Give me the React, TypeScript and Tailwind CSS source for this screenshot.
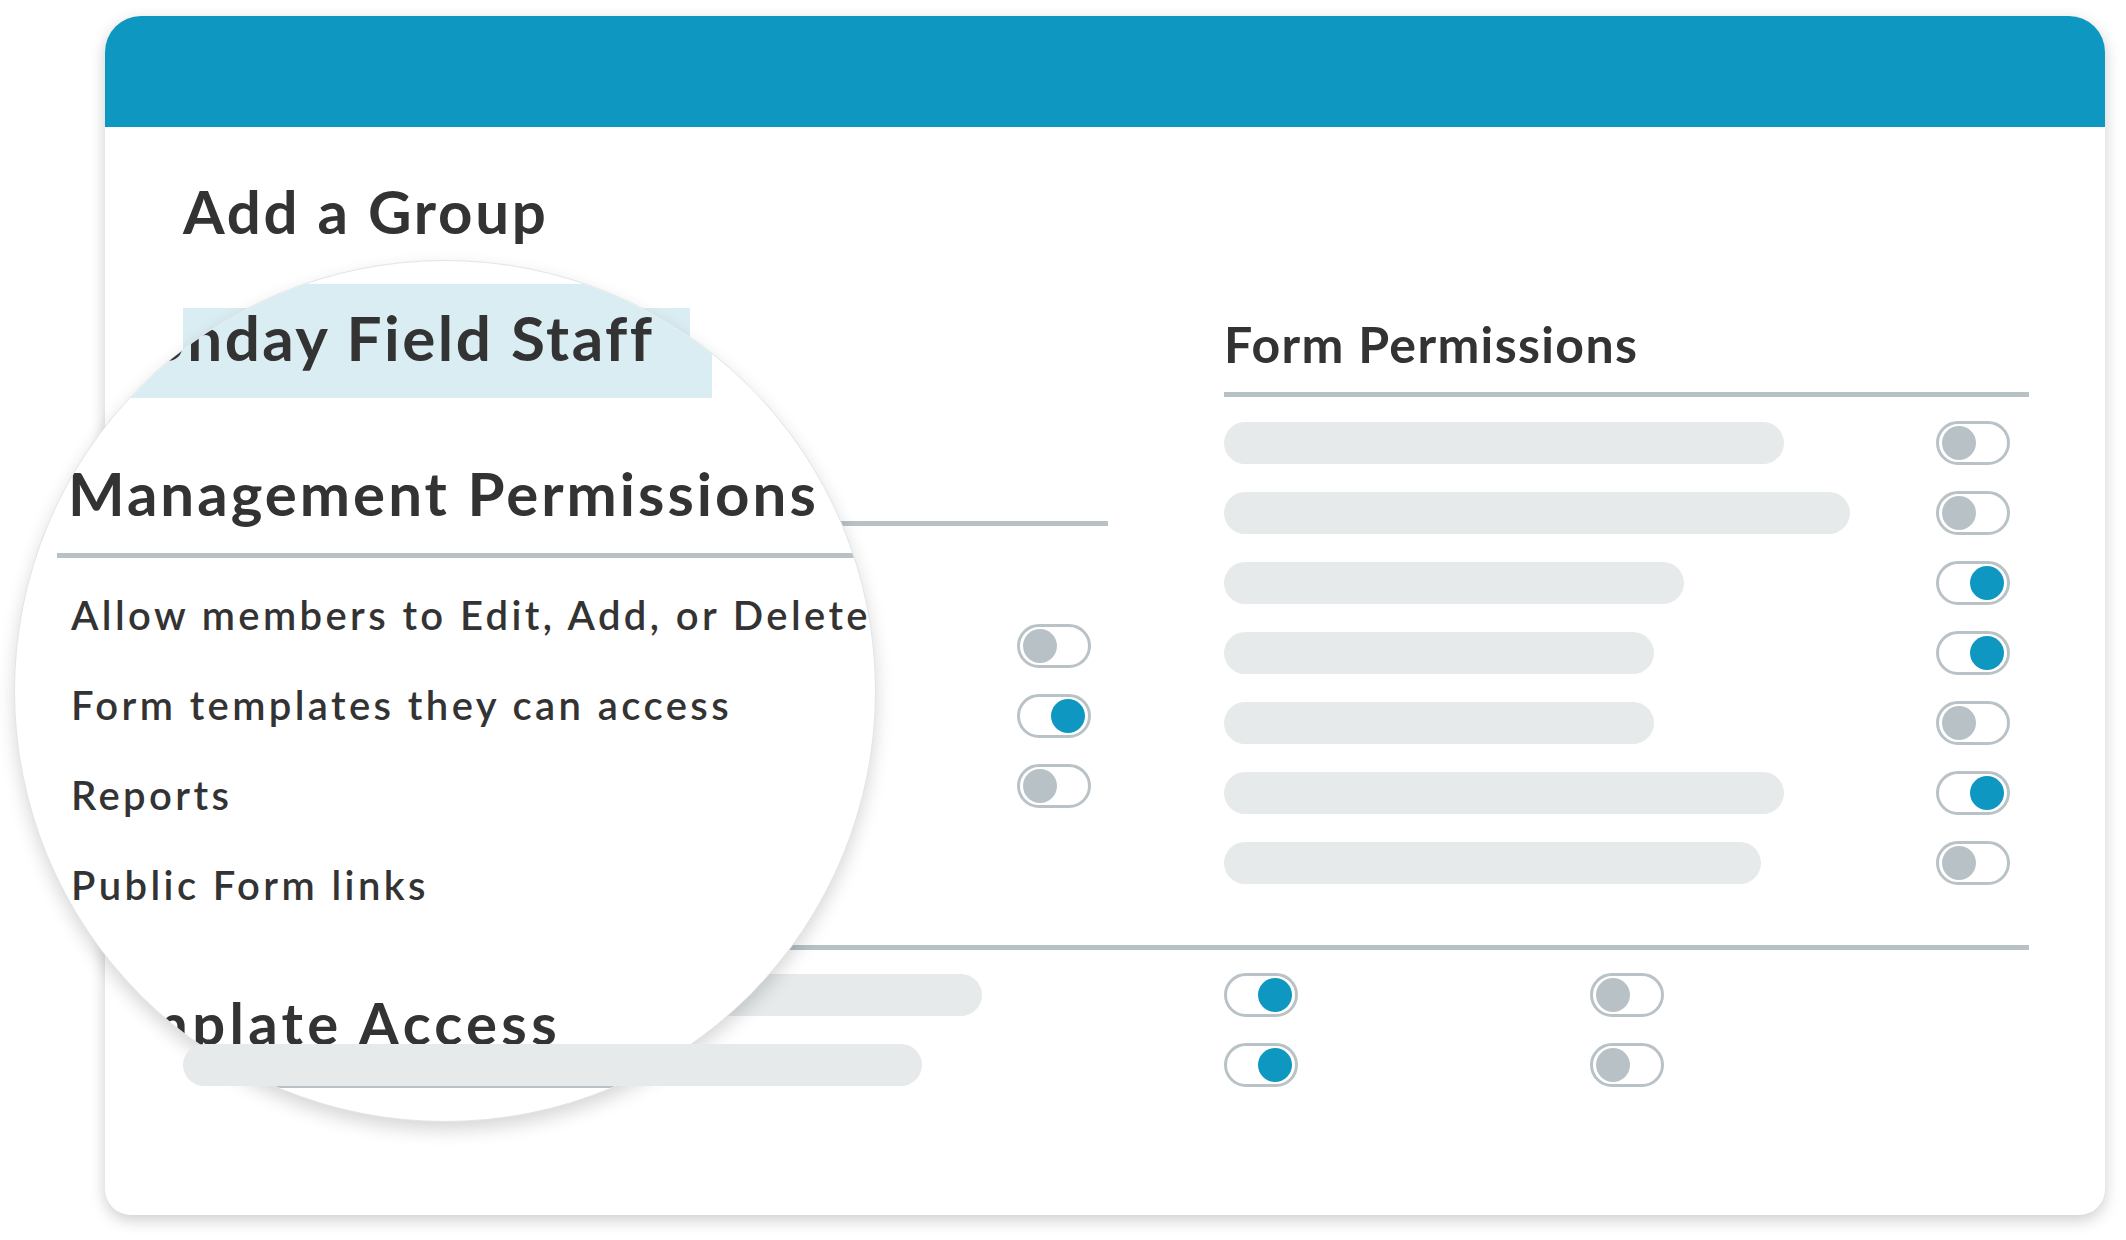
const FONT = "font-['Lato','Noto_Sans',sans-serif]"

function Toggle({ on }: { on: boolean }) {
  return (
    <div
      className={`flex h-[44px] w-[74px] shrink-0 items-center rounded-full border-[3px] border-[#b9c3c7] bg-white px-[3px] ${
        on ? 'justify-end' : 'justify-start'
      }`}
    >
      <div className={`h-[34px] w-[34px] rounded-full ${on ? 'bg-[#0e98c1]' : 'bg-[#b8c2c6]'}`} />
    </div>
  )
}

function Bar({ width }: { width: string }) {
  return <div className={`h-[42px] rounded-full bg-[#e6eaeb] ${width}`} />
}

const formRows = [
  { w: 'w-[560px]', on: false },
  { w: 'w-[626px]', on: false },
  { w: 'w-[460px]', on: true },
  { w: 'w-[430px]', on: true },
  { w: 'w-[430px]', on: false },
  { w: 'w-[560px]', on: true },
  { w: 'w-[537px]', on: false },
]

const magnifiedRows = [
  'Allow members to Edit, Add, or Delete Users',
  'Form templates they can access',
  'Reports',
  'Public Form links',
]

// the lens that blows up the left column
function Magnifier() {
  return (
    <div className="absolute left-[14px] top-[260px] z-10 h-[862px] w-[862px] overflow-hidden rounded-full border border-[#e2e5e6] bg-white shadow-[0_8px_18px_rgba(0,0,0,0.16)]">
      <div className="flex flex-col text-[#333333]">
        <div className="ml-[-20px] mt-[23px] h-[114px] w-[717px] bg-[#daedf3] pl-[94px] pt-[22px]">
          <div className="whitespace-nowrap text-[62px] font-bold leading-none tracking-[0.04em]">
            Monday Field Staff
          </div>
        </div>
        <h2 className="ml-[53px] mt-[65px] whitespace-nowrap text-[60px] font-bold leading-none tracking-[0.05em]">
          Management Permissions
        </h2>
        <div className="ml-[42px] mt-[30px] h-[5px] w-[900px] shrink-0 bg-[#b8c2c6]" />
        <div className="ml-[56px] mt-[37px] flex flex-col gap-[50px]">
          {magnifiedRows.map((label) => (
            <div key={label} className="whitespace-nowrap text-[40px] font-semibold leading-none tracking-[0.085em]">
              {label}
            </div>
          ))}
        </div>
        <h2 className="ml-[57px] mt-[89px] whitespace-nowrap text-[58px] font-bold leading-none tracking-[0.074em]">
          Template Access
        </h2>
        <div className="ml-[42px] mt-[31px] h-[5px] w-[900px] shrink-0 bg-[#b8c2c6]" />
      </div>
    </div>
  )
}

export default function App() {
  return (
    <div className={`relative min-h-screen bg-white pl-[105px] pt-[16px] ${FONT}`}>
      <div className="flex w-[2000px] flex-col rounded-b-[26px] rounded-t-[36px] bg-white pb-[128px] shadow-[0_5px_16px_rgba(0,0,0,0.2)]">
        {/* top bar */}
        <div className="h-[111px] rounded-t-[36px] bg-[#0e98c1]" />

        <div className="flex flex-col pl-[78px] pr-[76px] text-[#333333]">
          <h1 className="mt-[54px] text-[60px] font-bold leading-none tracking-[0.045em]">Add a Group</h1>

          <div className="mt-[67px] grid grid-cols-[925px_805px] gap-x-[116px]">
            {/* group name + management permissions */}
            <div className="flex flex-col">
              <div className="h-[95px] w-[507px] bg-[#daedf3]" />
              <div className="mt-[118px] h-[5px] bg-[#b8c2c6]" />
              <div className="mt-[98px] flex flex-col items-end gap-[26px] pr-[17px]">
                <Toggle on={false} />
                <Toggle on={true} />
                <Toggle on={false} />
              </div>
            </div>

            {/* form permissions */}
            <div className="flex flex-col">
              <h2 className="mt-[11px] text-[50px] font-bold leading-none tracking-[0.027em]">Form Permissions</h2>
              <div className="mt-[23px] h-[5px] bg-[#b8c2c6]" />
              <div className="mt-[24px] flex flex-col gap-[26px]">
                {formRows.map((row, i) => (
                  <div key={i} className="flex h-[44px] items-center justify-between pr-[19px]">
                    <Bar width={row.w} />
                    <Toggle on={row.on} />
                  </div>
                ))}
              </div>
            </div>
          </div>

          <div className="mt-[60px] h-[5px] bg-[#b8c2c6]" />

          {/* template access */}
          <div className="mt-[23px] flex flex-col gap-[26px]">
            <div className="grid grid-cols-[925px_805px] gap-x-[116px]">
              <div className="flex h-[44px] items-center">
                <Bar width="w-[799px]" />
              </div>
              <div className="flex items-center gap-[292px]">
                <Toggle on={true} />
                <Toggle on={false} />
              </div>
            </div>
            <div className="grid grid-cols-[925px_805px] gap-x-[116px]">
              <div className="relative z-20 flex h-[44px] items-center">
                <Bar width="w-[739px]" />
              </div>
              <div className="flex items-center gap-[292px]">
                <Toggle on={true} />
                <Toggle on={false} />
              </div>
            </div>
          </div>
        </div>
      </div>

      <Magnifier />
    </div>
  )
}
